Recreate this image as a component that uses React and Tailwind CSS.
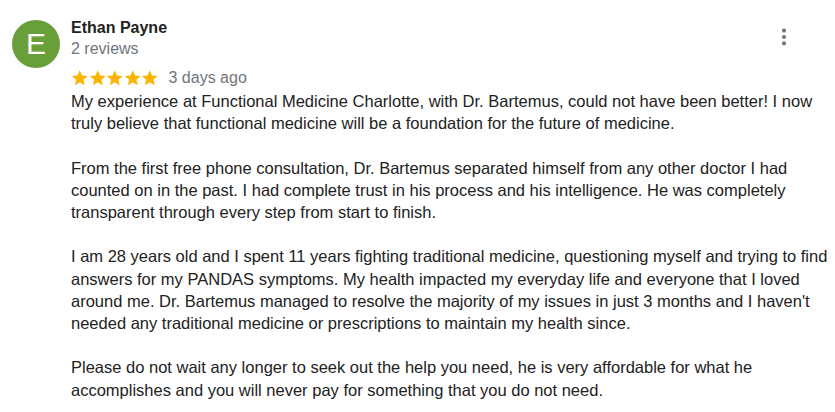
import { MoreVertical } from 'lucide-react';

const paragraphs = [
  'My experience at Functional Medicine Charlotte, with Dr. Bartemus, could not have been better! I now truly believe that functional medicine will be a foundation for the future of medicine.',
  'From the first free phone consultation, Dr. Bartemus separated himself from any other doctor I had counted on in the past. I had complete trust in his process and his intelligence. He was completely transparent through every step from start to finish.',
  "I am 28 years old and I spent 11 years fighting traditional medicine, questioning myself and trying to find answers for my PANDAS symptoms. My health impacted my everyday life and everyone that I loved around me. Dr. Bartemus managed to resolve the majority of my issues in just 3 months and I haven't needed any traditional medicine or prescriptions to maintain my health since.",
  'Please do not wait any longer to seek out the help you need, he is very affordable for what he accomplishes and you will never pay for something that you do not need.',
];

function Star() {
  return (
    <svg viewBox="0 0 24 24" className="w-[17.5px] h-[17.5px] fill-[#f9b500]">
      <path d="M12 1.8l3.1 7.1 7.7.7-5.8 5.1 1.7 7.6L12 18.3l-6.7 4 1.7-7.6-5.8-5.1 7.7-.7z" />
    </svg>
  );
}

export default function App() {
  return (
    <div className="w-[835px] h-[412px] bg-white overflow-hidden font-['Liberation_Sans',Arial,sans-serif]">
      <div className="flex pl-[12px] pt-[18px]">
        <div className="w-[48px] h-[48px] mt-[2px] shrink-0 rounded-full bg-[#689f38] flex items-center justify-center text-white text-[30px] leading-none">
          E
        </div>
        <div className="ml-[11px] flex-1">
          <div className="flex items-start">
            <div className="flex-1">
              <div className="text-[16px] leading-[19px] font-bold text-[#222]">Ethan Payne</div>
              <div className="text-[16px] leading-[19px] text-[#70757a] mt-[2px]">2 reviews</div>
            </div>
            <MoreVertical size={22} strokeWidth={2.6} className="text-[#70757a] mt-[8px] mr-[40px]" />
          </div>
          <div className="flex items-center mt-[10px] h-[19px]">
            <div className="flex">
              <Star /><Star /><Star /><Star /><Star />
            </div>
            <span className="ml-[10px] text-[16px] text-[#70757a]">3 days ago</span>
          </div>
          <div className="mt-[3px] w-[762px] text-[16.5px] leading-[22.2px] text-[#222] flex flex-col gap-[22.2px]">
            {paragraphs.map((p, i) => (
              <p key={i}>{p}</p>
            ))}
          </div>
        </div>
      </div>
    </div>
  );
}
